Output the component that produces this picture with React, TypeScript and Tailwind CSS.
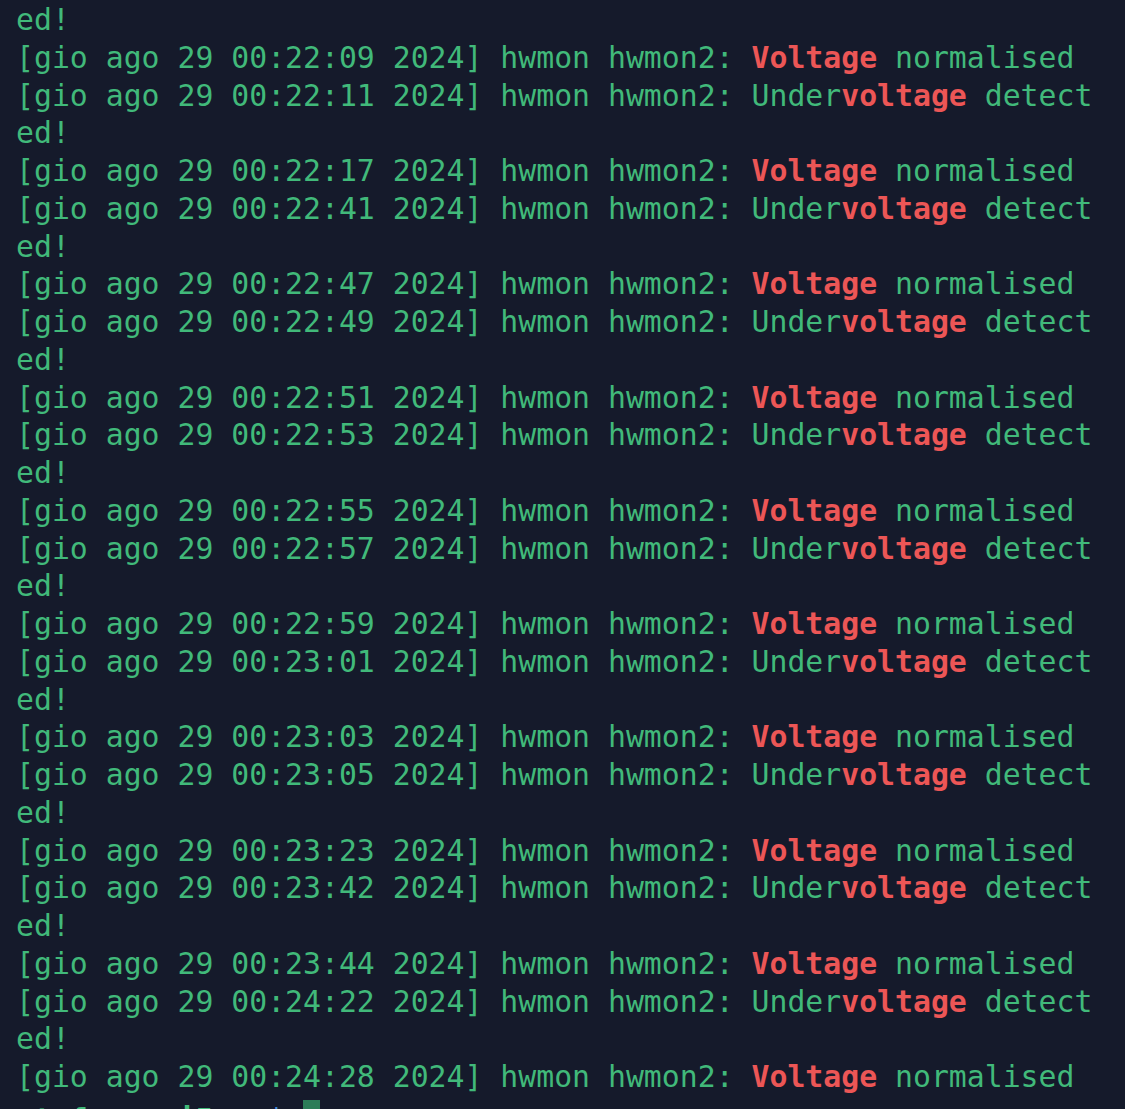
type Entry = { time: string; kind: "up" | "down" };

const entries: Entry[] = [
  { time: "00:22:09", kind: "up" },
  { time: "00:22:11", kind: "down" },
  { time: "00:22:17", kind: "up" },
  { time: "00:22:41", kind: "down" },
  { time: "00:22:47", kind: "up" },
  { time: "00:22:49", kind: "down" },
  { time: "00:22:51", kind: "up" },
  { time: "00:22:53", kind: "down" },
  { time: "00:22:55", kind: "up" },
  { time: "00:22:57", kind: "down" },
  { time: "00:22:59", kind: "up" },
  { time: "00:23:01", kind: "down" },
  { time: "00:23:03", kind: "up" },
  { time: "00:23:05", kind: "down" },
  { time: "00:23:23", kind: "up" },
  { time: "00:23:42", kind: "down" },
  { time: "00:23:44", kind: "up" },
  { time: "00:24:22", kind: "down" },
  { time: "00:24:28", kind: "up" },
];

function Line({ children }: { children: React.ReactNode }) {
  return <div className="h-[37.75px] whitespace-pre">{children}</div>;
}

function LogEntry({ entry }: { entry: Entry }) {
  const prefix = `[gio ago 29 ${entry.time} 2024] hwmon hwmon2: `;
  if (entry.kind === "up") {
    return (
      <Line>
        {prefix}
        <span className="font-bold text-[#ec5656]">Voltage</span> normalised
      </Line>
    );
  }
  return (
    <>
      <Line>
        {prefix}Under<span className="font-bold text-[#ec5656]">voltage</span> detect
      </Line>
      <Line>ed!</Line>
    </>
  );
}

export default function App() {
  return (
    <div className="h-[1109px] w-full overflow-hidden bg-[#151a2b]">
      <div className="pl-4 pt-px font-['DejaVu_Sans_Mono',monospace] text-[29.8px] leading-[37.75px] text-[#41b97a]">
        <Line>ed!</Line>
        {entries.map((e) => (
          <LogEntry key={e.time} entry={e} />
        ))}
        <Line>
          <span className="font-bold">stefano@pi5</span>:
          <span className="font-bold text-[#3d86d8]">~ $</span>{" "}
          <span className="inline-block h-[34px] w-[17px] translate-y-[4px] bg-[#2c7d58]" />
        </Line>
      </div>
    </div>
  );
}
